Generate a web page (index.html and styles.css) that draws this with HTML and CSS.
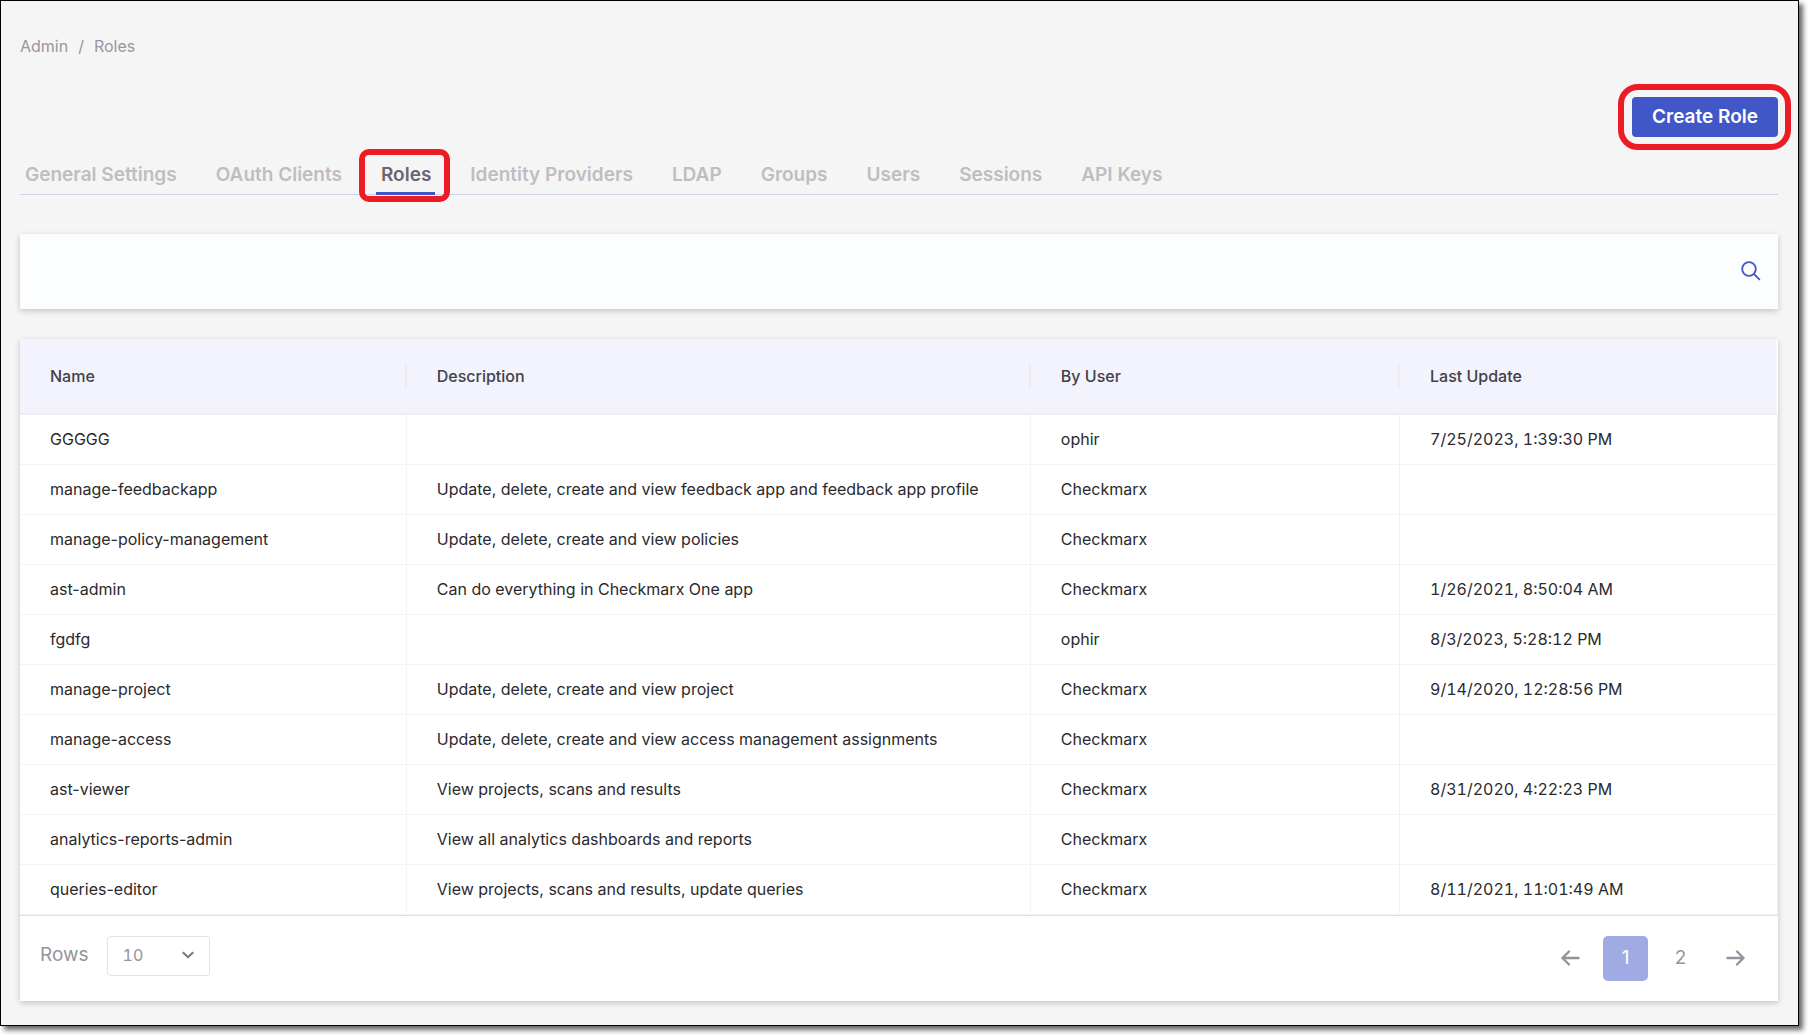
FILE: index.html
```html
<!DOCTYPE html>
<html lang="en">
<head>
<meta charset="utf-8">
<title>Roles</title>
<link rel="stylesheet" href="styles.css">
</head>
<body>
<main class="frame">
  <nav class="breadcrumb" aria-label="Breadcrumb">
    <a href="#">Admin</a><span>/</span><a href="#">Roles</a>
  </nav>

  <div class="actions">
    <div class="callout"><button class="create" type="button">Create Role</button></div>
  </div>

  <nav class="tabs" aria-label="Administration">
    <a class="tab" href="#">General Settings</a>
    <a class="tab" href="#">OAuth Clients</a>
    <a class="tab tab-active" href="#" aria-current="page">Roles</a>
    <a class="tab" href="#">Identity Providers</a>
    <a class="tab" href="#">LDAP</a>
    <a class="tab" href="#">Groups</a>
    <a class="tab" href="#">Users</a>
    <a class="tab" href="#">Sessions</a>
    <a class="tab" href="#">API Keys</a>
  </nav>

  <form class="search card" role="search">
    <input class="search-input" type="search" aria-label="Search roles">
    <button class="search-button" type="button" aria-label="Search">
      <svg width="20" height="20" viewBox="0 0 20 20" fill="none" stroke="currentColor" stroke-width="1.8"><circle cx="8" cy="8" r="6.8"/><path d="M12.8 12.8 18.8 18.8"/></svg>
    </button>
  </form>

  <section class="card">
    <table class="roles">
      <colgroup><col class="col-name"><col class="col-description"><col class="col-user"><col></colgroup>
      <thead>
        <tr><th scope="col">Name</th><th scope="col">Description</th><th scope="col">By User</th><th scope="col">Last Update</th></tr>
      </thead>
      <tbody>
        <tr><td>GGGGG</td><td></td><td>ophir</td><td>7/25/2023, 1:39:30 PM</td></tr>
        <tr><td>manage-feedbackapp</td><td>Update, delete, create and view feedback app and feedback app profile</td><td>Checkmarx</td><td></td></tr>
        <tr><td>manage-policy-management</td><td>Update, delete, create and view policies</td><td>Checkmarx</td><td></td></tr>
        <tr><td>ast-admin</td><td>Can do everything in Checkmarx One app</td><td>Checkmarx</td><td>1/26/2021, 8:50:04 AM</td></tr>
        <tr><td>fgdfg</td><td></td><td>ophir</td><td>8/3/2023, 5:28:12 PM</td></tr>
        <tr><td>manage-project</td><td>Update, delete, create and view project</td><td>Checkmarx</td><td>9/14/2020, 12:28:56 PM</td></tr>
        <tr><td>manage-access</td><td>Update, delete, create and view access management assignments</td><td>Checkmarx</td><td></td></tr>
        <tr><td>ast-viewer</td><td>View projects, scans and results</td><td>Checkmarx</td><td>8/31/2020, 4:22:23 PM</td></tr>
        <tr><td>analytics-reports-admin</td><td>View all analytics dashboards and reports</td><td>Checkmarx</td><td></td></tr>
        <tr><td>queries-editor</td><td>View projects, scans and results, update queries</td><td>Checkmarx</td><td>8/11/2021, 11:01:49 AM</td></tr>
      </tbody>
    </table>

    <footer class="table-footer">
      <div class="rows">
        <label class="rows-label" for="rows">Rows</label>
        <span class="select-wrap">
          <select id="rows" class="select"><option>10</option><option>20</option><option>50</option></select>
          <svg class="chevron" width="12" height="8" viewBox="0 0 12 8" fill="none" stroke="currentColor" stroke-width="2"><path d="M.8 1.2 6 6.2l5.2-5"/></svg>
        </span>
      </div>
      <nav class="pages" aria-label="Pagination">
        <button class="page" type="button" aria-label="Previous page">
          <svg width="20" height="16" viewBox="0 0 20 16" fill="none" stroke="currentColor" stroke-width="2.4" stroke-linecap="round" stroke-linejoin="round"><path d="M17.500 8H1.500M8 1.500 1.500 8l6.500 6.500"/></svg>
        </button>
        <button class="page page-current" type="button" aria-current="page">1</button>
        <button class="page" type="button">2</button>
        <button class="page" type="button" aria-label="Next page">
          <svg width="20" height="16" viewBox="0 0 20 16" fill="none" stroke="currentColor" stroke-width="2.4" stroke-linecap="round" stroke-linejoin="round"><path d="M1.500 8H17.500M11 1.500 17.500 8l-6.500 6.500"/></svg>
        </button>
      </nav>
    </footer>
  </section>
</main>
</body>
</html>
```
FILE: styles.css
```css
* { box-sizing: border-box; }

body {
  margin: 0;
  padding: 0 9px 9px 0;
  background: #fff;
  color: #2a2a2e;
  font-family: Inter, "Liberation Sans", sans-serif;
  font-size: 16px;
  line-height: 24px;
}

button, input, select { font: inherit; color: inherit; }
button { padding: 0; border: 0; background: none; cursor: pointer; }
a { color: inherit; text-decoration: none; }
svg { display: block; }

.frame {
  padding: 33px 20px 24px 19px;
  border: 1px solid #000;
  background: #f5f5f5;
  box-shadow: 4px 4px 5px rgba(0, 0, 0, 0.6);
}

.breadcrumb {
  display: flex;
  gap: 10px;
  color: #97979d;
}

.actions {
  display: flex;
  justify-content: flex-end;
  margin-top: 39px;
}

.create {
  display: block;
  height: 40px;
  padding: 0 20px;
  border-radius: 4px;
  background: #4257c7;
  color: #fff;
  font-size: 19px;
  font-weight: 600;
}

/* Red highlight outlines around the current step's controls */
.callout, .tab-active { position: relative; }
.callout::before, .tab-active::before {
  content: "";
  position: absolute;
  border: 6px solid #ed1c24;
  pointer-events: none;
}
.callout::before { inset: -13px -13px -13px -14px; border-radius: 20px; }
.tab-active::before { inset: -11px -15px -10px -17px; border-radius: 10px; }

.tabs {
  display: flex;
  gap: 30px;
  margin-top: 23px;
  border-bottom: 1px solid #cdd2f0;
}

.tab {
  height: 35px;
  margin-bottom: -1px;
  padding: 3px 4px 0 5px;
  border-bottom: 3px solid transparent;
  color: #bfbdc2;
  font-size: 19px;
  font-weight: 600;
}
.tab-active { border-color: #4257c7; color: #68666e; }

.card {
  background: #fff;
  box-shadow: 0 2px 6px rgba(0, 0, 0, 0.2);
}

.search {
  display: flex;
  align-items: center;
  height: 75px;
  margin: 39px 0 30px;
  padding-right: 17px;
  background: #fcfdff;
}
.search-input {
  flex: 1;
  height: 100%;
  padding: 0 30px;
  border: 0;
  outline: 0;
  background: none;
}
.search-button { padding-bottom: 2px; color: #4257c7; }

.roles {
  width: 100%;
  table-layout: fixed;
  border-collapse: separate;
  border-spacing: 0;
}
.col-name { width: 22%; }
.col-description { width: 35.5%; }
.col-user { width: 21%; }

.roles th, .roles td {
  padding: 0 30px;
  text-align: left;
}
.roles th {
  height: 76px;
  border-bottom: 2px solid #efeff2;
  background: linear-gradient(#ededf1, #ededf1) right center / 2px 26px no-repeat #f2f3fc;
  color: #414147;
  font-weight: 500;
}
.roles th:last-child { border-right: 2px solid #fbfbfd; background: #f2f3fc; }
.roles td {
  height: 50px;
  padding-bottom: 2px;
  border-right: 1px solid #f3f3f4;
  border-bottom: 1px solid #f3f3f4;
}
.roles td:last-child, .select { font-variant-numeric: tabular-nums; }

.table-footer {
  display: flex;
  align-items: flex-start;
  justify-content: space-between;
  padding: 20px;
  border-top: 1px solid #dfdfe1;
  color: #94939b;
  font-size: 19px;
}

.rows { display: flex; align-items: center; gap: 18px; }
.rows-label { padding-bottom: 2px; }
.select-wrap { position: relative; }
.select {
  display: block;
  width: 103px;
  height: 40px;
  padding: 0 15px 2px;
  border: 1px solid #e2e2e5;
  border-radius: 4px;
  background: #fff;
  font-size: 16px;
  appearance: none;
}
.chevron {
  position: absolute;
  top: 15px;
  right: 16px;
  color: #76747d;
  pointer-events: none;
}

.pages { display: flex; gap: 10px; }
.page {
  display: grid;
  place-items: center;
  width: 45px;
  height: 45px;
  padding-bottom: 2px;
  border-radius: 5px;
}
.page-current { background: #a1abe3; color: #fff; }
```
